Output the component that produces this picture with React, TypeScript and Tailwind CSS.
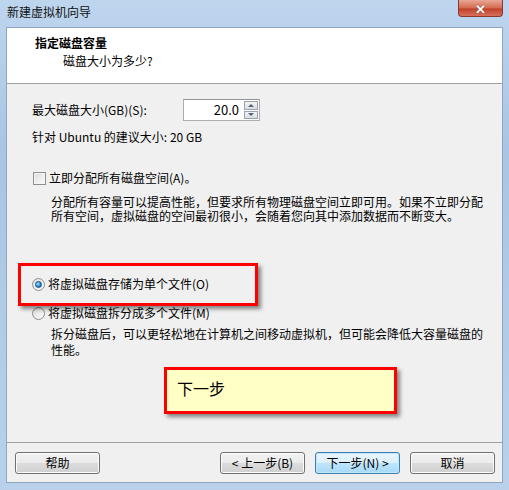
import React from "react";

const font = { fontFamily: '"Noto Sans CJK SC", "Liberation Sans", sans-serif' };

function WinButton({ label, primary }: { label: string; primary?: boolean }) {
  return (
    <div
      className={`flex h-[22px] w-[85px] items-center justify-center rounded-[3px] border text-[12px] text-black ${
        primary
          ? "border-[#3c7fb1] bg-[linear-gradient(#eaf6fd_0%,#d9f0fc_50%,#bee6fd_50%,#a7d9f5_100%)] shadow-[inset_0_0_0_1px_#c0e6fb]"
          : "border-[#707070] bg-[linear-gradient(#f2f2f2_0%,#ebebeb_50%,#dddddd_50%,#cfcfcf_100%)] shadow-[inset_0_0_0_1px_#fcfcfc]"
      }`}
    >
      {label}
    </div>
  );
}

function Radio({ checked }: { checked?: boolean }) {
  return (
    <div className="flex h-[13px] w-[13px] items-center justify-center rounded-full border border-[#8e8f8f] bg-[linear-gradient(135deg,#dcdcdc,#fbfbfb)]">
      {checked && (
        <div className="h-[7px] w-[7px] rounded-full border border-[#1a4d7a] bg-[radial-gradient(circle_at_35%_35%,#a6e0ff,#1a8ad8_60%,#0d5a9c)]" />
      )}
    </div>
  );
}

export default function App() {
  return (
    <div
      className="relative flex h-[490px] w-[509px] flex-col overflow-hidden bg-[linear-gradient(#bed5ee,#a9c5e5_30%,#b9d1ea)] text-[12px] leading-[16px] text-black"
      style={font}
    >
      {/* Title bar */}
      <div className="flex h-[27px] shrink-0 items-start">
        <div className="pl-[7px] pt-[4px] text-[12px] text-[#111]">新建虚拟机向导</div>
        <div className="ml-auto mr-[6px] flex h-[17px] w-[45px] items-center justify-center rounded-b-[4px] border border-t-0 border-[#8b3a2d] bg-[linear-gradient(#e8a794,#d46a52_50%,#c0412a_55%,#d8705a)]">
          <span className="text-[13px] font-bold leading-none text-white [text-shadow:0_0_1px_#5a1a10]">✕</span>
        </div>
      </div>

      {/* Client area */}
      <div className="mx-[6px] flex flex-1 flex-col border border-[#8ea6c2] bg-[#f0f0f0]">
        {/* Header */}
        <div className="h-[56px] shrink-0 border-b border-[#a0a0a0] bg-white pl-[28px] pt-[7px]">
          <div className="text-[12px] font-bold leading-[16px]">指定磁盘容量</div>
          <div className="pl-[28px] pt-[2px] leading-[16px]">磁盘大小为多少?</div>
        </div>

        {/* Body */}
        <div className="flex h-[358px] shrink-0 flex-col pl-[25px] pt-[15px]">
          <div className="flex h-[22px] items-center">
            <span className="w-[151px]">最大磁盘大小(GB)(S):</span>
            <div className="flex h-[22px] w-[77px] items-stretch border border-[#abadb3] border-t-[#8f9297] bg-white">
              <div className="flex flex-1 items-center justify-end pr-[4px] text-[13px]">20.0</div>
              <div className="flex w-[16px] flex-col gap-[1px] p-[1px]">
                <div className="flex flex-1 items-center justify-center border border-[#9aa3ad] bg-[linear-gradient(#f4f4f4,#dcdcdc)]">
                  <div className="h-0 w-0 border-x-[3px] border-b-[3px] border-x-transparent border-b-[#4d6185]" />
                </div>
                <div className="flex flex-1 items-center justify-center border border-[#9aa3ad] bg-[linear-gradient(#f4f4f4,#dcdcdc)]">
                  <div className="h-0 w-0 border-x-[3px] border-t-[3px] border-x-transparent border-t-[#4d6185]" />
                </div>
              </div>
            </div>
          </div>

          <div className="mt-[8px]">针对 Ubuntu 的建议大小: 20 GB</div>

          <div className="mt-[25px] flex items-center gap-[3px]">
            <div className="ml-[1px] h-[13px] w-[13px] border border-[#8e8f8f] bg-[linear-gradient(135deg,#dcdcdc,#fbfbfb)] shadow-[inset_0_0_0_1px_#f4f4f4]" />
            <span>立即分配所有磁盘空间(A)。</span>
          </div>

          <div className="mt-[9px] pl-[19px] leading-[14px] whitespace-nowrap">
            分配所有容量可以提高性能，但要求所有物理磁盘空间立即可用。如果不立即分配
            <br />
            所有空间，虚拟磁盘的空间最初很小，会随着您向其中添加数据而不断变大。
          </div>

          <div className="mt-[53px] flex items-center gap-[3px]">
            <Radio checked />
            <span>将虚拟磁盘存储为单个文件(O)</span>
          </div>

          <div className="mt-[13px] flex items-center gap-[3px]">
            <Radio />
            <span>将虚拟磁盘拆分成多个文件(M)</span>
          </div>

          <div className="mt-[5px] pl-[19px] leading-[16px] whitespace-nowrap">
            拆分磁盘后，可以更轻松地在计算机之间移动虚拟机，但可能会降低大容量磁盘的
            <br />
            性能。
          </div>
        </div>

        {/* Footer */}
        <div className="flex flex-1 items-start border-t border-[#a0a0a0] pl-[8px] pr-[7px] pt-[9px]">
          <WinButton label="帮助" />
          <div className="ml-auto flex gap-[10px]">
            <WinButton label="< 上一步(B)" />
            <WinButton label="下一步(N) >" primary />
            <WinButton label="取消" />
          </div>
        </div>
      </div>
      <div className="h-[7px] shrink-0" />

      {/* Annotations */}
      <div className="absolute left-[18px] top-[263px] h-[43px] w-[240px] border-[3px] border-[#ff0000] shadow-[3px_3px_4px_rgba(0,0,0,0.45)]" />
      <div className="absolute left-[164px] top-[367px] flex h-[47px] w-[233px] items-start border-[3px] border-[#ff0000] bg-[#ffffc6] pl-[10px] pt-[8px] shadow-[3px_3px_4px_rgba(0,0,0,0.45)]">
        <span className="text-[16px] leading-[20px]">下一步</span>
      </div>
    </div>
  );
}
